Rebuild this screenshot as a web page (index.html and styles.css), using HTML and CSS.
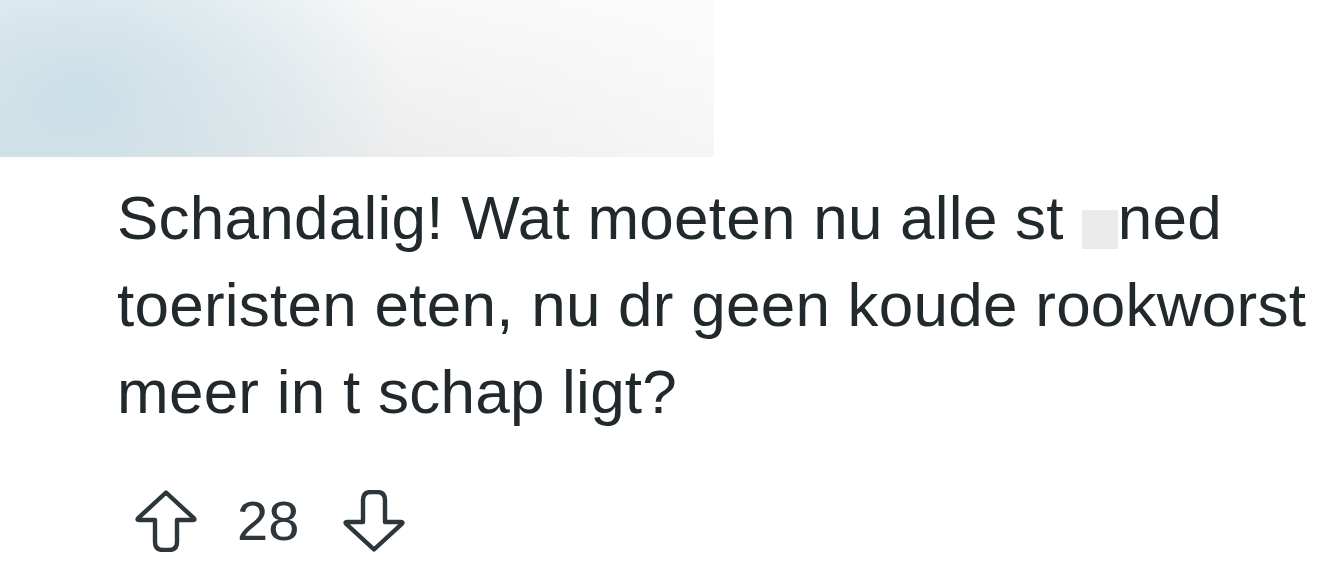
FILE: index.html
```html
<!DOCTYPE html>
<html lang="nl">
<head>
<meta charset="utf-8">
<title>Comment</title>
<link rel="stylesheet" href="styles.css">
</head>
<body>
<div class="media-blur"></div>
<div class="comment">
  <p class="comment-text">Schandalig! Wat moeten nu alle st<span class="redacted"></span>ned toeristen eten, nu dr geen koude rookworst meer in t schap ligt?</p>
  <div class="votes">
    <svg class="vote-icon" viewBox="0 0 62 62" aria-hidden="true">
      <path d="M31 2.5 L3.2 28.2 Q1.6 30 4 30 H20 V52 Q20 60 28 60 H34 Q42 60 42 52 V30 H58 Q60.4 30 58.8 28.2 Z"/>
    </svg>
    <span class="score">28</span>
    <svg class="vote-icon down" viewBox="0 0 62 62" aria-hidden="true">
      <path d="M31 2.5 L3.2 28.2 Q1.6 30 4 30 H20 V52 Q20 60 28 60 H34 Q42 60 42 52 V30 H58 Q60.4 30 58.8 28.2 Z"/>
    </svg>
  </div>
</div>
</body>
</html>
```

FILE: styles.css
```css
html, body {
  margin: 0;
  padding: 0;
  background: #ffffff;
}

body {
  width: 1330px;
  height: 562px;
  overflow: hidden;
  font-family: "Liberation Sans", Arial, sans-serif;
  color: #22292c;
}

.media-blur {
  width: 714px;
  height: 157px;
  background:
    radial-gradient(ellipse 320px 240px at 80px 95px, rgba(200, 222, 230, 0.9) 0%, rgba(200, 222, 230, 0.5) 45%, rgba(200, 222, 230, 0) 100%),
    linear-gradient(to bottom, rgba(255, 255, 255, 0.6) 0%, rgba(255, 255, 255, 0) 100%),
    linear-gradient(to right, #dde4e7 0%, #e9eaeb 40%, #f1f1f1 75%, #f6f6f6 100%);
}

.comment {
  padding-left: 117px;
}

.comment-text {
  margin: 17px 0 0 0;
  font-size: 62px;
  line-height: 87px;
  letter-spacing: 0.25px;
}

.redacted {
  display: inline-block;
  width: 36px;
  height: 39px;
  margin-left: 18px;
  vertical-align: -10px;
  background: #ebebeb;
}

.votes {
  display: flex;
  align-items: center;
  margin-top: 55px;
  padding-left: 18px;
}

.vote-icon {
  width: 62px;
  height: 62px;
  fill: none;
  stroke: #2c363b;
  stroke-width: 4.4;
  stroke-linejoin: round;
}

.vote-icon.down {
  transform: rotate(180deg);
}

.score {
  font-size: 56px;
  line-height: 62px;
  color: #2c363b;
  margin: 0 44px 0 40px;
}
```
